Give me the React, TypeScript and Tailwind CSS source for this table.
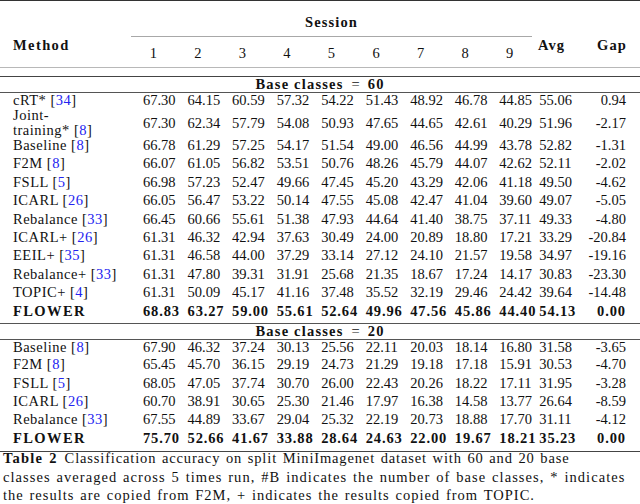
import React from 'react';

type Row = {
  name: React.ReactNode;
  vals: string[];
  avg: string;
  gap: string;
  bold?: boolean;
  cls?: string;
};

const Cite = ({ n }: { n: string }) => (
  <>
    [<span className="text-[#2323f0]">{n}</span>]
  </>
);

const base60: Row[] = [
  { name: <>cRT* <Cite n="34" /></>, vals: ["67.30", "64.15", "60.59", "57.32", "54.22", "51.43", "48.92", "46.78", "44.85"], avg: "55.06", gap: "0.94", cls: "h-[15px] items-start leading-[15px]" },
  {
    name: (
      <span className="block leading-[15px]">
        Joint-
        <br />
        training* <Cite n="8" />
      </span>
    ),
    vals: ["67.30", "62.34", "57.79", "54.08", "50.93", "47.65", "44.65", "42.61", "40.29"],
    avg: "51.96",
    gap: "-2.17",
    cls: "h-[27.8px] items-center leading-[18px]",
  },
  { name: <>Baseline <Cite n="8" /></>, vals: ["66.78", "61.29", "57.25", "54.17", "51.54", "49.00", "46.56", "44.99", "43.78"], avg: "52.82", gap: "-1.31" },
  { name: <>F2M <Cite n="8" /></>, vals: ["66.07", "61.05", "56.82", "53.51", "50.76", "48.26", "45.79", "44.07", "42.62"], avg: "52.11", gap: "-2.02" },
  { name: <>FSLL <Cite n="5" /></>, vals: ["66.98", "57.23", "52.47", "49.66", "47.45", "45.20", "43.29", "42.06", "41.18"], avg: "49.50", gap: "-4.62" },
  { name: <>ICARL <Cite n="26" /></>, vals: ["66.05", "56.47", "53.22", "50.14", "47.55", "45.08", "42.47", "41.04", "39.60"], avg: "49.07", gap: "-5.05" },
  { name: <>Rebalance <Cite n="33" /></>, vals: ["66.45", "60.66", "55.61", "51.38", "47.93", "44.64", "41.40", "38.75", "37.11"], avg: "49.33", gap: "-4.80" },
  { name: <>ICARL+ <Cite n="26" /></>, vals: ["61.31", "46.32", "42.94", "37.63", "30.49", "24.00", "20.89", "18.80", "17.21"], avg: "33.29", gap: "-20.84" },
  { name: <>EEIL+ <Cite n="35" /></>, vals: ["61.31", "46.58", "44.00", "37.29", "33.14", "27.12", "24.10", "21.57", "19.58"], avg: "34.97", gap: "-19.16" },
  { name: <>Rebalance+ <Cite n="33" /></>, vals: ["61.31", "47.80", "39.31", "31.91", "25.68", "21.35", "18.67", "17.24", "14.17"], avg: "30.83", gap: "-23.30" },
  { name: <>TOPIC+ <Cite n="4" /></>, vals: ["61.31", "50.09", "45.17", "41.16", "37.48", "35.52", "32.19", "29.46", "24.42"], avg: "39.64", gap: "-14.48" },
  { name: "FLOWER", vals: ["68.83", "63.27", "59.00", "55.61", "52.64", "49.96", "47.56", "45.86", "44.40"], avg: "54.13", gap: "0.00", bold: true },
];

const base20: Row[] = [
  { name: <>Baseline <Cite n="8" /></>, vals: ["67.90", "46.32", "37.24", "30.13", "25.56", "22.11", "20.03", "18.14", "16.80"], avg: "31.58", gap: "-3.65", cls: "h-[15.4px] items-start leading-[14px]" },
  { name: <>F2M <Cite n="8" /></>, vals: ["65.45", "45.70", "36.15", "29.19", "24.73", "21.29", "19.18", "17.18", "15.91"], avg: "30.53", gap: "-4.70" },
  { name: <>FSLL <Cite n="5" /></>, vals: ["68.05", "47.05", "37.74", "30.70", "26.00", "22.43", "20.26", "18.22", "17.11"], avg: "31.95", gap: "-3.28" },
  { name: <>ICARL <Cite n="26" /></>, vals: ["60.70", "38.91", "30.65", "25.30", "21.46", "17.97", "16.38", "14.58", "13.77"], avg: "26.64", gap: "-8.59" },
  { name: <>Rebalance <Cite n="33" /></>, vals: ["67.55", "44.89", "33.67", "29.04", "25.32", "22.19", "20.73", "18.88", "17.70"], avg: "31.11", gap: "-4.12" },
  { name: "FLOWER", vals: ["75.70", "52.66", "41.67", "33.88", "28.64", "24.63", "22.00", "19.67", "18.21"], avg: "35.23", gap: "0.00", bold: true },
];

function DataRow({ row }: { row: Row }) {
  const num = row.bold ? "font-bold tracking-[0.85px]" : "";
  return (
    <div className={`grid grid-cols-[137.2px_repeat(9,44.56px)_42px_1fr] ${row.cls ?? "h-[18.44px] items-center leading-[18.44px]"}`}>
      <div className={`pl-[13px] whitespace-nowrap ${row.bold ? "font-bold tracking-[1.4px]" : "tracking-[0.5px]"}`}>{row.name}</div>
      {row.vals.map((v, i) => (
        <div key={i} className={`pl-[5.8px] whitespace-nowrap ${num}`}>
          {v}
        </div>
      ))}
      <div className={`pl-[1.2px] whitespace-nowrap ${num}`}>{row.avg}</div>
      <div className={`pr-[14px] text-right whitespace-nowrap ${row.bold ? "font-bold tracking-[0.9px]" : ""}`}>{row.gap}</div>
    </div>
  );
}

function GroupTitle({ n, h }: { n: string; h: string }) {
  return (
    <div className={`flex items-center justify-center ${h}`}>
      <span className="font-bold tracking-[1.2px]">Base classes</span>
      <span className="px-[8px]">=</span>
      <span className="font-bold tracking-[1.1px]">{n}</span>
    </div>
  );
}

export default function App() {
  return (
    <div className="w-[640px] h-[504px] overflow-hidden bg-white text-[#111] text-[14.5px] font-['Liberation_Serif',serif]">
      <div className="h-[1px] bg-[#333]" />

      {/* header */}
      <div className="grid grid-cols-[131px_401px_1fr] h-[66px] leading-[16px]">
        <div className="pl-[13px] pt-[36px] font-bold tracking-[1.4px]">Method</div>
        <div>
          <div className="pt-[13px] text-center font-bold tracking-[1.1px]">Session</div>
          <div className="mt-[6px] h-[1px] bg-[#a8a8a8]" />
          <div className="grid grid-cols-9 pt-[8px]">
            {["1", "2", "3", "4", "5", "6", "7", "8", "9"].map((d) => (
              <div key={d} className="text-center">
                {d}
              </div>
            ))}
          </div>
        </div>
        <div className="flex justify-between pl-[6px] pr-[13px] pt-[36px] font-bold tracking-[1.1px]">
          <span>Avg</span>
          <span>Gap</span>
        </div>
      </div>

      <div className="h-[1px] bg-[#b8b8b8]" />
      <div className="h-[8px]" />
      <div className="h-[1px] bg-[#444]" />

      <GroupTitle n="60" h="h-[15px]" />
      <div className="h-[1px] bg-[#555]" />
      {base60.map((r, i) => (
        <DataRow key={i} row={r} />
      ))}

      <div className="h-[3px]" />
      <div className="h-[1px] bg-[#555]" />
      <GroupTitle n="20" h="h-[14.5px]" />
      <div className="h-[1px] bg-[#555]" />
      {base20.map((r, i) => (
        <DataRow key={i} row={r} />
      ))}

      <div className="h-[3.7px]" />
      <div className="h-[1px] bg-[#444]" />

      {/* caption */}
      <div className="-mt-[2.5px] pl-[3px] leading-[18.4px] tracking-[1px] [word-spacing:1.2px] whitespace-nowrap">
        <div>
          <span className="font-bold tracking-[1.2px]">Table 2</span>
          <span className="pl-[7px] tracking-[0.85px]">Classification accuracy on split MiniImagenet dataset with 60 and 20 base</span>
        </div>
        <div className="tracking-[1.05px]">classes averaged across 5 times run, #B indicates the number of base classes, * indicates</div>
        <div>the results are copied from F2M, + indicates the results copied from TOPIC.</div>
      </div>
    </div>
  );
}
